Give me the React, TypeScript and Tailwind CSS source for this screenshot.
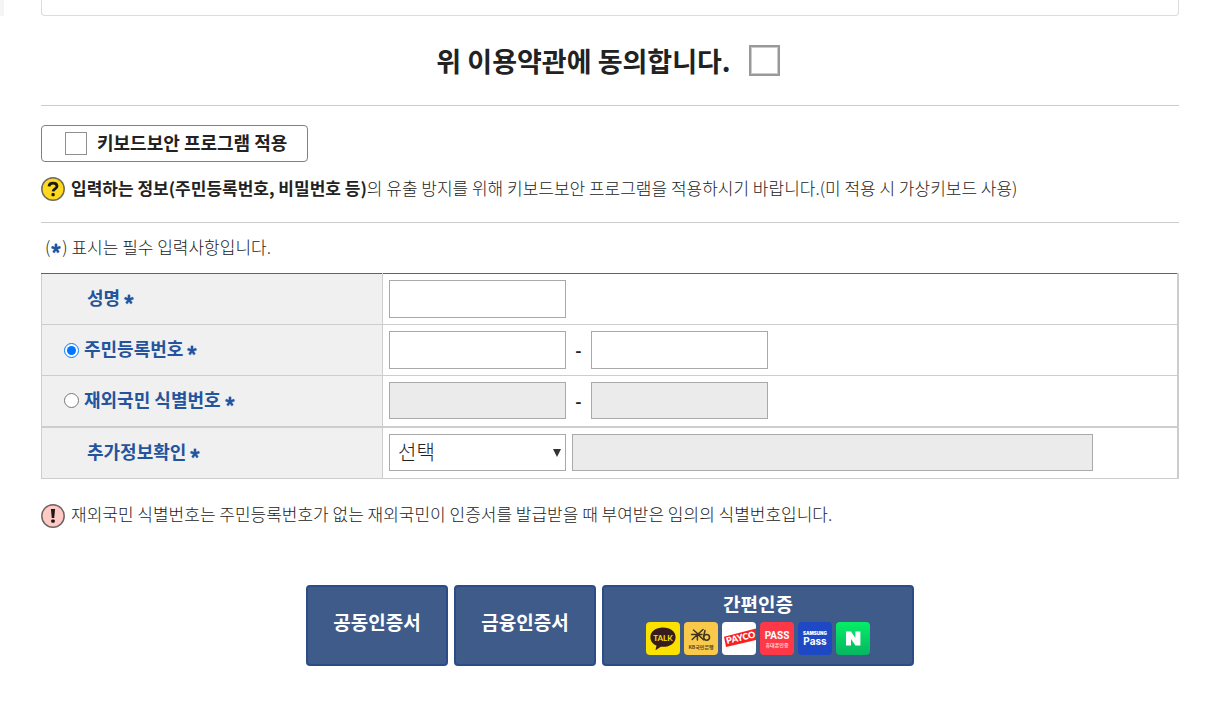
import React from "react";

function Star() {
  return (
    <svg viewBox="0 0 12 12" className="h-3 w-3 shrink-0" role="img" aria-label="필수">
      <g stroke="#a9bfe2" strokeWidth="3.4" strokeLinecap="round">
        <path d="M6 6.500V3M6 6.500L3 5.500M6 6.500l3-1M6 6.500L4.200 9.500M6 6.500l1.800 3" />
      </g>
      <g stroke="#24549c" strokeWidth="2.2">
        <path d="M6 6.500V1.800M6 6.500L1.600 5.100M6 6.500l4.400-1.400M6 6.500L3.400 10.300M6 6.500l2.600 3.800" />
      </g>
    </svg>
  );
}

function QuestionIcon() {
  return (
    <svg viewBox="0 0 24 24" className="h-6 w-6 shrink-0" aria-hidden="true">
      <circle cx="12" cy="12" r="11.2" fill="#ffd91f" stroke="#6f6b5c" strokeWidth="1.5" />
      <path d="M8 9.400C8.200 7.100 9.700 6.200 12 6.200c2.400 0 4 1.100 4 3 0 2.700-3.800 2.600-3.900 5.200" fill="none" stroke="#1d1a10" strokeWidth="2.800" />
      <rect x="10.500" y="16" width="3.200" height="3.200" rx="1" fill="#1d1a10" />
    </svg>
  );
}

function WarnIcon() {
  return (
    <svg viewBox="0 0 24 24" className="h-6 w-6 shrink-0" aria-hidden="true">
      <circle cx="12" cy="12" r="11.2" fill="#ffc9c4" stroke="#6e6361" strokeWidth="1.5" />
      <path d="M9.900 5h4.200l-.9 9h-2.400z" fill="#201816" />
      <rect x="10.200" y="15.400" width="3.600" height="3.400" rx="1.200" fill="#201816" />
    </svg>
  );
}

function Logos() {
  return (
    <span className="flex gap-1" aria-hidden="true">
      <svg viewBox="0 0 34 33" className="h-[33px] w-[34px]">
        <rect width="34" height="33" rx="4" fill="#fae100" />
        <path d="M17 5.600c7.300 0 12.600 4 12.600 9.600S24.300 24.800 17 24.800c-.8 0-1.500 0-2.200-.1l-5.300 3.600 1-4.700C6.700 22 4.400 19.100 4.400 15.200c0-5.600 5.300-9.600 12.600-9.600z" fill="#371c1d" />
        <text x="17" y="18.600" fontSize="8" fontWeight="700" fontFamily="Lato, sans-serif" textAnchor="middle" fill="#fae100">TALK</text>
      </svg>
      <svg viewBox="0 0 34 33" className="h-[33px] w-[34px]">
        <rect width="34" height="33" rx="4" fill="#f8c94a" />
        <g fill="none" stroke="#3f351f" strokeWidth="1.500" strokeLinecap="round">
          <path d="M9.500 8l4 3.500M19 7.500L8.200 17.500M7.500 12.400h10.500M13.400 12.600V18M14 12.500l5.500 5.300" />
          <path d="M21 8.500l-1.500 6.500" />
          <circle cx="22.600" cy="15.300" r="2.900" />
        </g>
        <text x="17" y="27.300" fontSize="5" fontWeight="700" fontFamily="'Noto Sans CJK KR', sans-serif" textAnchor="middle" fill="#5a4820">KB국민은행</text>
      </svg>
      <svg viewBox="0 0 34 33" className="h-[33px] w-[34px]">
        <defs>
          <clipPath id="payco"><rect width="34" height="33" rx="4" /></clipPath>
        </defs>
        <rect width="34" height="33" rx="4" fill="#fff" />
        <g clipPath="url(#payco)">
          <path d="M2 14.800L36 6v11.500L4 25z" fill="#f9201e" />
        </g>
        <text x="5" y="22" fontSize="9" fontWeight="800" fontFamily="Lato, sans-serif" fill="#fff" transform="rotate(-13 5 22)">PAYCO</text>
      </svg>
      <svg viewBox="0 0 34 33" className="h-[33px] w-[34px]">
        <rect width="34" height="33" rx="4" fill="#ff3848" />
        <text x="17" y="17.200" fontSize="10" fontWeight="700" fontFamily="Roboto, sans-serif" textAnchor="middle" fill="#fff">PASS</text>
        <text x="17" y="24.500" fontSize="5" fontFamily="'Noto Sans CJK KR', sans-serif" textAnchor="middle" fill="#ffd0d4">휴대폰인증</text>
      </svg>
      <svg viewBox="0 0 34 33" className="h-[33px] w-[34px]">
        <rect width="34" height="33" rx="4" fill="#1e48c4" />
        <text x="17" y="13" fontSize="4.500" fontWeight="900" fontFamily="Inter, sans-serif" textAnchor="middle" fill="#fff">SAMSUNG</text>
        <text x="17" y="22.700" fontSize="10" fontWeight="700" fontFamily="Inter, sans-serif" textAnchor="middle" fill="#fff">Pass</text>
      </svg>
      <svg viewBox="0 0 34 33" className="h-[33px] w-[34px]">
        <defs>
          <linearGradient id="naver" x1="0" y1="0" x2="0" y2="1">
            <stop offset="0" stopColor="#04ef66" />
            <stop offset="1" stopColor="#07b562" />
          </linearGradient>
        </defs>
        <rect width="34" height="33" rx="4" fill="url(#naver)" />
        <path d="M10 9.500h5l4.400 6.500V9.500h5v14h-5L15 17v6.500h-5z" fill="#fff" />
      </svg>
    </span>
  );
}

const th = "w-[341px] border border-[#cdcdcd] bg-[#f0f0f0] p-0 text-left text-lg leading-6 font-bold text-[#24549c]";
const td = "border border-r-2 border-[#cdcdcd] py-0 pr-2 pl-1.5";
const field = "block w-[177px] border border-[#a9a9a9] px-2 text-lg";
const radio = "m-0 h-[15px] w-[15px] accent-[#0075ff]";
const action = "h-[81px] rounded border-2 border-[#2b4c87] bg-[#3f5b8a] text-[19px] leading-7 font-bold text-white";

export default function App() {
  return (
    <main className="bg-white font-['Noto_Sans_CJK_KR',sans-serif] text-[17px] leading-6 font-light text-[#222]">
      <div className="flex pr-[45px]">
        <div className="mr-[37px] h-4 w-1 bg-[#f5f5f5]" />
        <div className="h-4 grow rounded-b border border-t-0 border-[#dcdcdc]" />
      </div>

      <form className="pr-[45px] pb-9 pl-[41px]" onSubmit={(e) => e.preventDefault()}>
        <div className="flex h-[89px] items-center justify-center pr-1">
          <label className="flex items-center gap-[18px] text-[27px] leading-10 font-bold">
            위 이용약관에 동의합니다.
            <input type="checkbox" className="h-[31px] w-[31px] appearance-none border-2 border-[#999] bg-white shadow-[inset_0_0_0_1px_#ccc] checked:bg-[#3f5b8a]" />
          </label>
        </div>

        <section className="border-y border-[#cdcdcd] pt-[19px] pb-[21px]">
          <label className="flex h-[37px] w-[267px] items-center gap-2.5 rounded border border-[#808080] pl-[23px] text-lg leading-6 font-bold">
            <input type="checkbox" className="h-[23px] w-[22px] appearance-none border border-[#909090] bg-white checked:bg-[#3f5b8a]" />
            <span className="pb-1">키보드보안 프로그램 적용</span>
          </label>
          <p className="mt-[15px] flex h-6 items-center gap-1.5 whitespace-nowrap">
            <QuestionIcon />
            <span className="pb-0.5">
              <strong className="font-bold">입력하는 정보(주민등록번호, 비밀번호 등)</strong>의 유출 방지를 위해 키보드보안 프로그램을 적용하시기 바랍니다.(미 적용 시 가상키보드 사용)
            </span>
          </p>
        </section>

        <p className="flex h-[50px] items-center pl-1">
          <span className="pb-0.5">(</span>
          <Star />
          <span className="pb-0.5">) 표시는 필수 입력사항입니다.</span>
        </p>

        <table className="w-full border-collapse">
          <tbody>
            <tr className="h-[51px]">
              <th scope="row" className={`${th} border-t-[#3a69a8]`}>
                <label htmlFor="name" className="flex items-center gap-[3px] pl-[45px]">
                  <span className="pb-1">성명</span>
                  <Star />
                </label>
              </th>
              <td className={`${td} border-t-[#3a69a8]`}>
                <input id="name" className={`${field} h-[38px]`} />
              </td>
            </tr>
            <tr className="h-[51px]">
              <th scope="row" className={th}>
                <label className="flex items-center gap-[3px] pl-[22px]">
                  <input type="radio" name="idType" defaultChecked className={radio} />
                  <span className="pb-1 pl-0.5">주민등록번호</span>
                  <Star />
                </label>
              </th>
              <td className={td}>
                <div className="flex items-center">
                  <input aria-label="주민등록번호 앞자리" className={`${field} h-[38px]`} />
                  <span className="w-[25px] text-center font-bold">-</span>
                  <input type="password" aria-label="주민등록번호 뒷자리" className={`${field} h-[38px]`} />
                </div>
              </td>
            </tr>
            <tr className="h-[51px]">
              <th scope="row" className={th}>
                <label className="flex items-center gap-[3px] pl-[22px]">
                  <input type="radio" name="idType" className={radio} />
                  <span className="pb-1 pl-0.5">재외국민 식별번호</span>
                  <Star />
                </label>
              </th>
              <td className={td}>
                <div className="flex items-center">
                  <input disabled aria-label="식별번호 앞자리" className={`${field} h-[37px] bg-[#ebebeb]`} />
                  <span className="w-[25px] text-center font-bold">-</span>
                  <input disabled type="password" aria-label="식별번호 뒷자리" className={`${field} h-[37px] bg-[#ebebeb]`} />
                </div>
              </td>
            </tr>
            <tr className="h-[52px] border-t-2 border-[#cdcdcd]">
              <th scope="row" className={th}>
                <label htmlFor="extra" className="flex items-center gap-[3px] pl-[45px]">
                  <span className="pb-1">추가정보확인</span>
                  <Star />
                </label>
              </th>
              <td className={td}>
                <div className="flex items-center gap-1.5">
                  <div className="relative">
                    <select id="extra" className="block h-[37px] w-[177px] appearance-none border border-[#a9a9a9] bg-white pr-6 pb-0.5 pl-2 text-xl leading-7 font-light">
                      <option>선택</option>
                    </select>
                    <svg viewBox="0 0 8 8" className="pointer-events-none absolute top-[15px] right-[5px] h-2 w-2" aria-hidden="true">
                      <path d="M0 0h8L4 8z" fill="#333" />
                    </svg>
                  </div>
                  <input disabled aria-label="추가정보" className="block h-[37px] w-full max-w-[521px] border border-[#a9a9a9] bg-[#ebebeb] px-2" />
                </div>
              </td>
            </tr>
          </tbody>
        </table>

        <p className="mt-[25px] flex h-6 items-center gap-1.5 whitespace-nowrap">
          <WarnIcon />
          <span className="pb-1">재외국민 식별번호는 주민등록번호가 없는 재외국민이 인증서를 발급받을 때 부여받은 임의의 식별번호입니다.</span>
        </p>

        <div className="mt-[57px] flex justify-center gap-1.5">
          <button type="button" className={`${action} w-[142px] pb-2`}>공동인증서</button>
          <button type="button" className={`${action} w-[142px] pb-2`}>금융인증서</button>
          <button type="button" className={`${action} flex w-[312px] flex-col items-center justify-center gap-1 pb-1.5`}>
            간편인증
            <Logos />
          </button>
        </div>
      </form>
    </main>
  );
}
